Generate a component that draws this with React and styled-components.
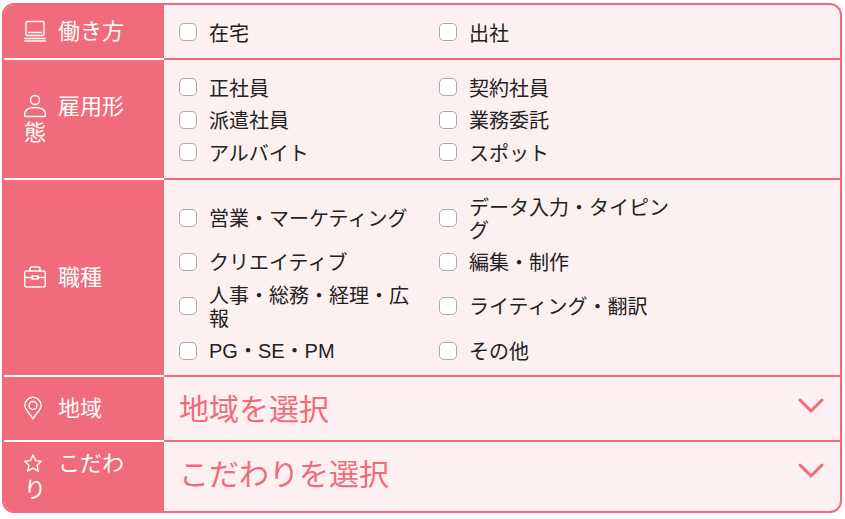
import React from 'react';
import styled, {createGlobalStyle} from 'styled-components';

const GlobalStyle = createGlobalStyle`
    html, body {
        margin : 0;
        padding : 0;
        background : #FFFFFF;
        font-family : "Noto Sans CJK JP", "Noto Sans", sans-serif;
    }
`;

const Page = styled.div`
    padding : 3px 3px 0 2px;
`;

const Card = styled.div`
    border : 2px solid #F06B7B;
    border-radius : 12px;
    overflow : hidden;
    background : #FDF0F1;
`;

const Row = styled.div`
    display : flex;
    min-height : ${props => props.$height}px;
    border-bottom : ${props => props.$last ? 'none' : '2px solid #F06B7B'};
`;

const Label = styled.div`
    width : 160px;
    flex : none;
    box-sizing : border-box;
    margin-bottom : ${props => props.$last ? '0' : '-2px'};
    padding : 0 20px 4px 20px;
    display : flex;
    align-items : center;
    background : #F06B7B;
    border-bottom : ${props => props.$last ? 'none' : '2px solid #FFFFFF'};
    color : #FFFFFF;
    font-size : 22px;
    line-height : 25px;
`;

const LabelText = styled.div`
    width : 100%;
`;

const IconBox = styled.span`
    display : inline-block;
    width : 24px;
    height : 24px;
    margin-right : 10px;
    vertical-align : -4px;

    svg {
        display : block;
    }
`;

const Options = styled.div`
    flex : 1;
    display : grid;
    grid-template-columns : 260px 260px;
    align-content : center;
    row-gap : 9.5px;
    padding : ${props => props.$top || 1}px 15px 0;
`;

const Option = styled.label`
    display : flex;
    align-items : center;
    gap : 12px;
    font-size : 20px;
    line-height : 23px;
    color : #222222;
`;

const Box = styled.span`
    width : 18px;
    height : 18px;
    flex : none;
    box-sizing : border-box;
    background : #FFFFFF;
    border : 1px solid #ABABAB;
    border-radius : 5px;
`;

const OptionText = styled.span`
    width : 212px;
`;

const Latin = styled.span`
    font-family : "Liberation Sans", sans-serif;
`;

const Select = styled.div`
    flex : 1;
    height : 59px;
    display : flex;
    align-items : center;
    justify-content : space-between;
    padding : 0 16px 0 15px;
    color : #F06B7B;
    font-size : 30px;
`;

const Chevron = styled.svg`
    width : 26px;
    height : 16px;
    margin-bottom : 1px;
`;

const stroke = {fill : 'none', stroke : '#FFFFFF', strokeWidth : 1.4, strokeLinecap : 'round', strokeLinejoin : 'round'};

const PcIcon = () => (
    <svg width="24" height="24" viewBox="0 0 24 24" {...stroke}>
        <rect x="2" y="2.5" width="18" height="14" rx="1" />
        <path d="M4.5 13.5H17.5" />
        <path d="M0.7 19.5H21.3" />
        <path d="M0.7 22H21.3" />
    </svg>
);

const PersonIcon = () => (
    <svg width="24" height="24" viewBox="0 0 24 24" {...stroke}>
        <circle cx="11" cy="6" r="4.5" />
        <path d="M0.7 22.5V20C0.7 15.5 5 13.5 11 13.5S21.3 15.5 21.3 20V22.5Z" />
    </svg>
);

const BagIcon = () => (
    <svg width="24" height="24" viewBox="0 0 24 24" {...stroke}>
        <rect x="0.7" y="6" width="20.6" height="16" rx="2" />
        <path d="M6 6V3.5C6 2.7 6.7 2 7.5 2H14.5C15.3 2 16 2.7 16 3.5V6" />
        <path d="M0.7 12.5H8M14 12.5H21.3" />
        <rect x="8" y="11" width="6" height="3" />
    </svg>
);

const PinIcon = () => (
    <svg width="24" height="24" viewBox="0 0 24 24" {...stroke}>
        <path d="M9 23C6 17.5 0.8 14 0.8 9.5A8.2 8.2 0 0 1 17.2 9.5C17.2 14 12 17.5 9 23Z" />
        <circle cx="9" cy="9.5" r="4" />
    </svg>
);

const StarIcon = () => (
    <svg width="24" height="24" viewBox="0 0 24 24" {...stroke}>
        <path d="M9 4L11.6 9.6L17.4 10.3L13.1 14.3L14.3 20.2L9 17.2L3.7 20.2L4.9 14.3L0.6 10.3L6.4 9.6Z" />
    </svg>
);

const ChevronIcon = () => (
    <Chevron viewBox="0 0 26 16" fill="none" stroke="#F06B7B" strokeWidth="3" strokeLinecap="round" strokeLinejoin="miter">
        <path d="M2 2L13 13L24 2" />
    </Chevron>
);

const SectionLabel = ({icon, text, last}) => (
    <Label $last={last}>
        <LabelText>
            <IconBox>{icon}</IconBox>
            {text}
        </LabelText>
    </Label>
);

const OptionList = ({items, top}) => (
    <Options $top={top}>
        {items.map((item, index) => (
            <Option key={index}>
                <Box />
                <OptionText>{item}</OptionText>
            </Option>
        ))}
    </Options>
);

const workStyle = ['在宅', '出社'];
const employment = ['正社員', '契約社員', '派遣社員', '業務委託', 'アルバイト', 'スポット'];
const jobs = [
    '営業・マーケティング',
    'データ入力・タイピング',
    'クリエイティブ',
    '編集・制作',
    '人事・総務・経理・広報',
    'ライティング・翻訳',
    <><Latin>PG</Latin>・<Latin>SE</Latin>・<Latin>PM</Latin></>,
    'その他',
];

function App() {
    return (
        <Page>
            <GlobalStyle />
            <Card>
                <Row $height={53}>
                    <SectionLabel icon={<PcIcon />} text="働き方" />
                    <OptionList items={workStyle} />
                </Row>
                <Row $height={118}>
                    <SectionLabel icon={<PersonIcon />} text="雇用形態" />
                    <OptionList items={employment} />
                </Row>
                <Row $height={195}>
                    <SectionLabel icon={<BagIcon />} text="職種" />
                    <OptionList items={jobs} top={3} />
                </Row>
                <Row $height={63}>
                    <SectionLabel icon={<PinIcon />} text="地域" />
                    <Select>
                        地域を選択
                        <ChevronIcon />
                    </Select>
                </Row>
                <Row $height={69} $last>
                    <SectionLabel icon={<StarIcon />} text="こだわり" last />
                    <Select>
                        こだわりを選択
                        <ChevronIcon />
                    </Select>
                </Row>
            </Card>
        </Page>
    );
}

export default App;
